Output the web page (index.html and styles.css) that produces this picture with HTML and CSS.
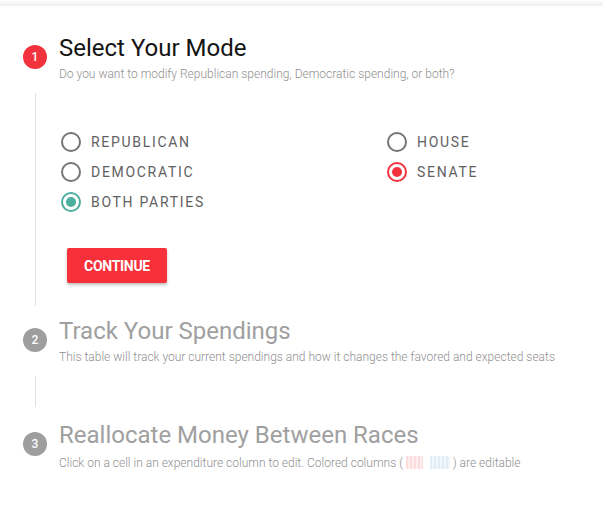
FILE: index.html
```html
<!DOCTYPE html>
<html>
<head>
<meta charset="utf-8">
<link rel="stylesheet" href="styles.css">
</head>
<body>
<div class="topbar"></div>
<div class="stepper">
  <div class="step">
    <div class="rail"><div class="badge red">1</div><div class="line l1"></div></div>
    <div class="content">
      <div class="title">Select Your Mode</div>
      <div class="sub">Do you want to modify Republican spending, Democratic spending, or both?</div>
      <div class="options">
        <div class="col">
          <div class="opt"><span class="radio"></span><span class="lbl">REPUBLICAN</span></div>
          <div class="opt"><span class="radio"></span><span class="lbl">DEMOCRATIC</span></div>
          <div class="opt"><span class="radio teal"></span><span class="lbl">BOTH PARTIES</span></div>
        </div>
        <div class="col col2">
          <div class="opt"><span class="radio"></span><span class="lbl">HOUSE</span></div>
          <div class="opt"><span class="radio redr"></span><span class="lbl">SENATE</span></div>
        </div>
      </div>
      <button class="btn">CONTINUE</button>
    </div>
  </div>
  <div class="step">
    <div class="rail"><div class="badge gray">2</div><div class="line l2"></div></div>
    <div class="content">
      <div class="title dim">Track Your Spendings</div>
      <div class="sub">This table will track your current spendings and how it changes the favored and expected seats</div>
    </div>
  </div>
  <div class="step">
    <div class="rail"><div class="badge gray">3</div></div>
    <div class="content">
      <div class="title dim">Reallocate Money Between Races</div>
      <div class="sub last">Click on a cell in an expenditure column to edit. Colored columns ( <span class="sw swr"></span> <span class="sw swb"></span> ) are editable</div>
    </div>
  </div>
</div>
</body>
</html>
```
FILE: styles.css
```css
* { box-sizing: border-box; }
body {
  margin: 0;
  background: #fff;
  font-family: Roboto, "Liberation Sans", sans-serif;
  width: 605px;
  height: 510px;
  overflow: hidden;
}
.topbar {
  height: 5px;
  margin-top: 1px;
  width: 603px;
  background: linear-gradient(#fafafa, #f0f0f0);
}
.stepper {
  padding: 27px 0 0 23px;
}
.step {
  display: flex;
}
.rail {
  width: 24px;
  display: flex;
  flex-direction: column;
  align-items: center;
  margin-right: 12px;
}
.badge {
  width: 24px;
  height: 24px;
  border-radius: 50%;
  color: #fff;
  font-size: 12px;
  font-weight: 500;
  display: flex;
  align-items: center;
  justify-content: center;
  margin-top: 12px;
}
.red { background: #f2333d; }
.gray { background: #9e9e9e; }
.line {
  width: 1px;
  background: #e0e0e0;
}
.l1 { height: 213px; margin-top: 24px; margin-bottom: 10px; }
.l2 { height: 31px; margin-top: 24px; margin-bottom: 13px; }
.content { flex: 1; }
.title {
  font-size: 24px;
  color: #141414;
  line-height: 30px;
  height: 30px;
}
.title.dim { color: #a0a0a0; }
.sub {
  font-size: 12px;
  font-weight: 300;
  color: #909090;
  line-height: 16px;
  margin-top: 3px;
  white-space: nowrap;
}
.sub.last { margin-top: 5px; }
.options {
  display: flex;
  margin-top: 50px;
  padding-left: 2px;
}
.col { width: 326px; display: flex; flex-direction: column; gap: 10px; }
.col2 { width: auto; }
.opt {
  display: flex;
  align-items: center;
  height: 20px;
}
.radio {
  width: 20px;
  height: 20px;
  border-radius: 50%;
  border: 2px solid #757575;
  margin-right: 10px;
  position: relative;
  flex: none;
}
.radio.teal { border-color: #4caf9f; }
.radio.teal::after, .radio.redr::after {
  content: "";
  position: absolute;
  left: 3px; top: 3px;
  width: 10px; height: 10px;
  border-radius: 50%;
  background: #4caf9f;
}
.radio.redr { border-color: #f2333d; }
.radio.redr::after { background: #f2333d; }
.lbl {
  font-size: 14px;
  color: #616161;
  letter-spacing: 1.7px;
}
.btn {
  display: block;
  margin: 36px 0 0 8px;
  width: 100px;
  height: 35px;
  border: none;
  border-radius: 2px;
  background: #f7303a;
  color: #fff;
  font-family: Roboto, "Liberation Sans", sans-serif;
  font-weight: 700;
  font-size: 14px;
  letter-spacing: -0.3px;
  box-shadow: 0 2px 3px rgba(0,0,0,0.25);
  padding: 0;
}
.sw {
  display: inline-block;
  width: 17px;
  height: 13px;
  vertical-align: -2px;
}
.swr { background: repeating-linear-gradient(90deg, #fcdcdd 0 2px, #feeeee 2px 4px); }
.swb { background: repeating-linear-gradient(90deg, #e2edf8 0 2px, #f1f6fc 2px 4px); width: 20px; margin-left: 4px; }
```
